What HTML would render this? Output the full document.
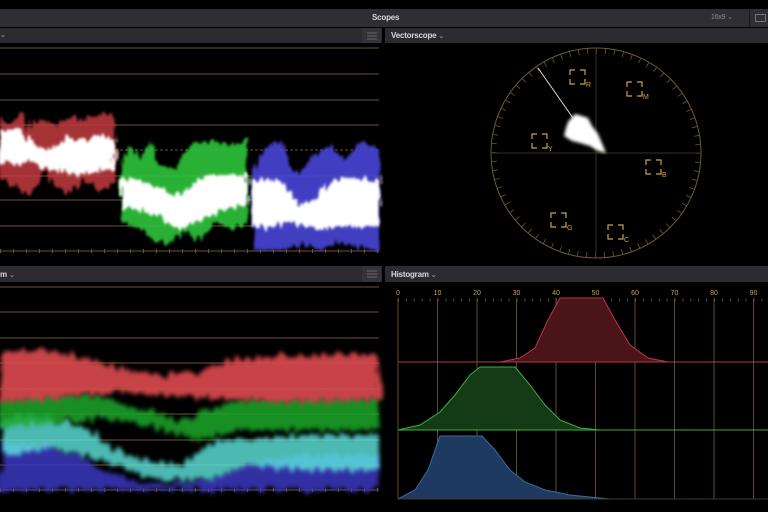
<!DOCTYPE html>
<html><head><meta charset="utf-8"><style>
*{margin:0;padding:0;box-sizing:border-box}
body{width:768px;height:512px;background:#000;overflow:hidden;position:relative;font-family:"Liberation Sans",sans-serif}
.bar{position:absolute;background:#2b2b30}
.t{position:absolute;color:#d8d8dc;font-size:8px;font-weight:bold;letter-spacing:-0.2px}
.g{color:#8a8a90;font-size:7px}
</style></head><body>
<div class="bar" style="left:0;top:9px;width:768px;height:18px;background:#2e2e33"></div>
<div class="t" style="left:372px;top:13px">Scopes</div>
<div class="t g" style="left:711px;top:13px;font-weight:normal">16x9 ⌄</div>
<div style="position:absolute;left:749px;top:9px;width:1px;height:18px;background:#1a1a1d"></div>
<div style="position:absolute;left:755px;top:14px;width:11px;height:8px;border:1px solid #777;border-radius:1px"></div>
<div class="bar" style="left:0;top:28px;width:382px;height:15px"></div>
<div class="bar" style="left:362px;top:28px;width:19px;height:15px;background:#333338"></div>
<div class="bar" style="left:385px;top:28px;width:383px;height:15px"></div>
<div class="t" style="left:391px;top:31px">Vectorscope <span class="g">⌄</span></div>
<div class="t g" style="left:0;top:31px">⌄</div>
<div class="bar" style="left:0;top:266px;width:382px;height:16px"></div>
<div class="bar" style="left:362px;top:266px;width:19px;height:16px;background:#333338"></div>
<div class="bar" style="left:385px;top:266px;width:383px;height:16px"></div>
<div class="t" style="left:0;top:270px">m <span class="g">⌄</span></div>
<div class="t" style="left:391px;top:270px">Histogram <span class="g">⌄</span></div>
<svg width="768" height="512" style="position:absolute;left:0;top:0" xmlns="http://www.w3.org/2000/svg">
<defs>
<filter id="b2" x="-10%" y="-20%" width="120%" height="140%"><feTurbulence type="fractalNoise" baseFrequency="0.25 0.04" numOctaves="2" seed="3" result="n"/><feDisplacementMap in="SourceGraphic" in2="n" scale="14" xChannelSelector="R" yChannelSelector="G" result="d"/><feGaussianBlur in="d" stdDeviation="1.2"/></filter>
<filter id="b4" x="-10%" y="-20%" width="120%" height="140%"><feTurbulence type="fractalNoise" baseFrequency="0.2 0.03" numOctaves="2" seed="7" result="n"/><feDisplacementMap in="SourceGraphic" in2="n" scale="16" xChannelSelector="R" yChannelSelector="G" result="d"/><feGaussianBlur in="d" stdDeviation="2"/></filter>
<filter id="bb"><feGaussianBlur stdDeviation="1.5"/></filter>
</defs>
<g stroke="#777" stroke-width="0.8">
<line x1="367" y1="33" x2="377" y2="33"/><line x1="367" y1="36" x2="377" y2="36"/><line x1="367" y1="39" x2="377" y2="39"/>
<line x1="367" y1="271" x2="377" y2="271"/><line x1="367" y1="274" x2="377" y2="274"/><line x1="367" y1="277" x2="377" y2="277"/>
</g>
<g stroke="#6a5534" stroke-width="1">
<line x1="0" y1="48" x2="379" y2="48"/><line x1="0" y1="74" x2="379" y2="74"/><line x1="0" y1="100" x2="379" y2="100"/><line x1="0" y1="125" x2="379" y2="125"/>
<line x1="0" y1="150" x2="379" y2="150" stroke-dasharray="3 2"/>
<line x1="0" y1="176" x2="379" y2="176"/><line x1="0" y1="200" x2="379" y2="200"/><line x1="0" y1="226" x2="379" y2="226"/><line x1="0" y1="251" x2="379" y2="251"/>
<line x1="0" y1="251" x2="379" y2="251" stroke-dasharray="1 12" stroke-width="4"/>
</g>
<path d="M0,118 L10,125 20,112 30,130 40,118 55,125 70,115 85,122 100,112 115,118 L115,185 100,190 85,178 70,195 55,185 45,170 30,195 15,185 0,180Z" fill="#c23a3f" opacity=".85" filter="url(#b2)"/>
<path d="M0,132 L20,128 35,145 50,150 65,138 85,140 100,136 115,138 L115,170 95,172 80,175 60,172 45,168 30,162 10,165 0,162Z" fill="#fff" filter="url(#b2)"/>
<path d="M121,165 L130,145 140,160 150,140 160,165 175,170 190,145 210,140 230,145 247,140 L247,225 230,228 215,222 200,240 185,232 170,245 155,242 140,228 121,222Z" fill="#2ec43a" opacity=".9" filter="url(#b2)"/>
<path d="M121,178 L140,180 160,188 175,195 190,185 205,175 247,175 L247,205 225,208 210,215 195,222 180,230 165,222 150,212 135,208 121,208Z" fill="#fff" filter="url(#b2)"/>
<path d="M253,170 L265,150 280,140 290,165 300,175 315,155 330,145 345,160 360,140 379,150 L379,250 360,248 340,242 320,250 300,245 280,250 253,250Z" fill="#4844d8" opacity=".9" filter="url(#b2)"/>
<path d="M253,182 L270,178 285,185 300,205 315,200 330,182 350,178 379,178 L379,225 360,228 340,226 320,230 300,225 285,222 270,228 253,225Z" fill="#fff" filter="url(#b2)"/>
<g stroke="#6a5534" stroke-width="1">
<line x1="0" y1="287" x2="379" y2="287"/><line x1="0" y1="312" x2="379" y2="312"/><line x1="0" y1="338" x2="379" y2="338"/><line x1="0" y1="363" x2="379" y2="363"/><line x1="0" y1="389" x2="379" y2="389"/><line x1="0" y1="414" x2="379" y2="414"/><line x1="0" y1="440" x2="379" y2="440"/><line x1="0" y1="465" x2="379" y2="465"/><line x1="0" y1="490" x2="379" y2="490"/>
<line x1="0" y1="490" x2="379" y2="490" stroke-dasharray="1 12" stroke-width="4"/>
</g>
<path d="M0,440 L40,445 80,455 100,470 130,480 170,485 200,480 230,470 260,460 300,455 379,455 L379,490 0,490Z" fill="#3a38c0" opacity=".85" filter="url(#b4)"/>
<path d="M0,420 L40,415 80,425 110,445 140,460 180,465 200,450 220,440 250,440 300,435 379,435 L379,470 300,470 250,465 210,478 170,482 130,470 100,460 60,450 0,455Z" fill="#5ee8e0" opacity=".8" filter="url(#b4)"/>
<path d="M0,400 L60,395 100,395 140,410 180,420 210,410 240,400 379,398 L379,430 240,430 200,440 160,430 120,420 80,420 0,428Z" fill="#1fa82a" opacity=".85" filter="url(#b4)"/>
<path d="M0,355 L40,348 80,358 120,368 160,375 200,372 230,360 270,356 379,355 L379,400 300,402 240,400 200,398 160,395 120,392 80,395 40,400 0,402Z" fill="#dd4c4f" opacity=".9" filter="url(#b4)"/>
<circle cx="596" cy="153" r="105" fill="none" stroke="#6e5a30" stroke-width="1"/>
<circle cx="596" cy="153" r="102" fill="none" stroke="#6e5a30" stroke-width="5" stroke-dasharray="0.8 8.1"/>
<line x1="491" y1="153" x2="701" y2="153" stroke="#3a3220"/>
<line x1="596" y1="48" x2="596" y2="258" stroke="#3a3220"/>
<line x1="538" y1="68" x2="573" y2="118" stroke="#ddd" stroke-width="1"/>
<path d="M568,122 L575,114 582,116 588,118 592,126 598,134 604,148 606,153 598,151 590,146 580,143 572,141 564,136 566,128Z" fill="#fff" filter="url(#bb)"/>
<g stroke="#c9a24a" stroke-width="1.2" fill="none">
<path id="bx" d="M570,75 v-5 h5 M580,70 h5 v5 M585,79 v5 h-5 M575,84 h-5 v-5"/>
<use href="#bx" x="57" y="12"/><use href="#bx" x="-38" y="64"/><use href="#bx" x="76" y="90"/><use href="#bx" x="-19" y="143"/><use href="#bx" x="38" y="155"/>
</g>
<g fill="#c9a24a" font-size="7" font-family="Liberation Sans">
<text x="586" y="87">R</text><text x="643" y="99">M</text><text x="548" y="151">Y</text><text x="662" y="177">B</text><text x="567" y="230">G</text><text x="624" y="242">C</text>
</g>
<g stroke="#5e4b2c" stroke-width="1">
<line x1="398" y1="298" x2="398" y2="499"/><line x1="437.5" y1="298" x2="437.5" y2="499"/><line x1="477" y1="298" x2="477" y2="499"/><line x1="516.5" y1="298" x2="516.5" y2="499"/><line x1="556" y1="298" x2="556" y2="499"/><line x1="595.5" y1="298" x2="595.5" y2="499"/><line x1="635" y1="298" x2="635" y2="499"/><line x1="674.5" y1="298" x2="674.5" y2="499"/><line x1="714" y1="298" x2="714" y2="499"/><line x1="753.5" y1="298" x2="753.5" y2="499"/>
<line x1="398" y1="300" x2="768" y2="300" stroke-dasharray="1 6.9" stroke-width="3"/>
</g>
<g fill="#c9a24a" font-size="7" font-family="Liberation Sans" text-anchor="middle">
<text x="398" y="295">0</text><text x="437.5" y="295">10</text><text x="477" y="295">20</text><text x="516.5" y="295">30</text><text x="556" y="295">40</text><text x="595.5" y="295">50</text><text x="635" y="295">60</text><text x="674.5" y="295">70</text><text x="714" y="295">80</text><text x="753.5" y="295">90</text>
</g>
<path d="M398,362 L500,362 520,358 535,348 548,320 560,298 603,298 615,320 630,345 648,358 668,362 768,362Z" fill="#4a1418" stroke="#b8374a" stroke-width="1"/>
<path d="M398,430 L420,425 440,412 455,395 470,375 480,367 515,367 530,385 545,405 560,420 580,428 600,430 768,430Z" fill="#143a16" stroke="#3eae3e" stroke-width="1"/>
<path d="M398,499 L415,490 428,470 440,436 482,436 495,450 510,470 525,482 545,490 570,495 610,499Z" fill="#1e3a60" stroke="#3a6aa0" stroke-width="1"/>
<line x1="398" y1="499" x2="768" y2="499" stroke="#3a3a2a"/>
</svg>
</body></html>
